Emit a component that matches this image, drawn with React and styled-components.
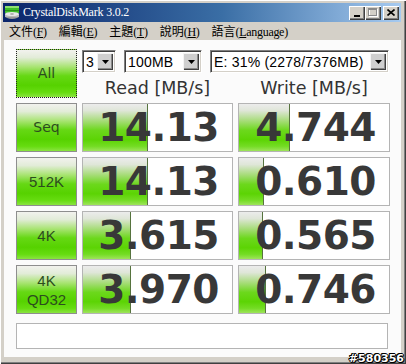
import React from "react";
import styled, { createGlobalStyle } from "styled-components";

const GlobalStyle = createGlobalStyle`
  html, body {
    margin: 0;
    padding: 0;
    background: #d4d0c8;
  }
`;

const Window = styled.div`
  position: relative;
  width: 406px;
  height: 364px;
  box-sizing: border-box;
  padding: 3px 5px 7px 3px;
  background: #d4d0c8;
  box-shadow: inset 1px 1px #ffffff, inset -1px -1px #404040, inset -2px -2px #808080;
  display: flex;
  flex-direction: column;
  overflow: hidden;
`;

const TitleBar = styled.div`
  height: 19px;
  display: flex;
  align-items: center;
  padding: 0 2px 0 1px;
  background: linear-gradient(to right, #0a246a 0%, #3a6ea5 55%, #a6caf0 100%);
`;

const TitleText = styled.span`
  flex: 1;
  margin-left: 3px;
  color: #ffffff;
  font-family: "Liberation Serif", "DejaVu Serif", serif;
  font-size: 12px;
  letter-spacing: -0.2px;
`;

const CaptionButton = styled.div`
  width: 16px;
  height: 14px;
  box-sizing: border-box;
  margin-left: ${(p) => (p.$gap ? "2px" : "0")};
  background: #d4d0c8;
  box-shadow: inset 1px 1px #ffffff, inset -1px -1px #404040, inset -2px -2px #808080;
  display: flex;
  align-items: center;
  justify-content: center;
`;

const MenuBar = styled.div`
  height: 18px;
  display: flex;
  align-items: center;
  font-family: "Noto Sans CJK TC", "Liberation Serif", serif;
  font-size: 12px;
  color: #000;
`;

const MenuItem = styled.span`
  padding: 0 5px 0 6px;
  margin-right: 1px;
  line-height: 16px;
  white-space: nowrap;
`;

const MenuKey = styled.span`
  font-family: "Liberation Serif", serif;
  font-size: 12px;
  letter-spacing: -0.3px;
  & u {
    text-underline-offset: 1px;
  }
`;

const Client = styled.div`
  flex: 1;
  margin: 0 0 0 1px;
  background: #fbfbfb;
  padding: 9px 0 0 12px;
  display: grid;
  grid-template-columns: 61px 151px 152px;
  grid-template-rows: 23px 21px repeat(4, 49px) 30px;
  column-gap: 5px;
  row-gap: 5px;
  align-content: start;
`;

const GreenButton = styled.div`
  box-sizing: border-box;
  grid-row: ${(p) => p.$row || "auto"};
  border: 1px ${(p) => (p.$focus ? "dotted #222" : "solid #8e8e8e")};
  background: linear-gradient(
    to bottom,
    #f2f2ee 0%,
    #e2ecd8 16%,
    #a8e472 36%,
    #66d814 55%,
    #56d200 75%,
    #66dc10 90%,
    #8ae440 100%
  );
  display: flex;
  flex-direction: column;
  align-items: center;
  justify-content: center;
`;

const ButtonLabel = styled.span`
  color: #2c4d1e;
  font-family: ${(p) => (p.$bold ? '"DejaVu Sans", sans-serif' : '"Liberation Sans", Arial, sans-serif')};
  font-size: ${(p) => (p.$bold ? "14px" : "15px")};
  line-height: 19px;
`;

const ComboRow = styled.div`
  grid-column: 2 / 4;
  display: flex;
  gap: 8px;
  margin-top: 1px;
`;

const Combo = styled.div`
  width: ${(p) => p.$w}px;
  height: 23px;
  box-sizing: border-box;
  background: #ffffff;
  border: 1px solid;
  border-color: #808080 #ffffff #ffffff #808080;
  box-shadow: inset 1px 1px #404040, inset -1px -1px #d4d0c8;
  display: flex;
  align-items: center;
  padding: 2px 2px 2px 3px;
  font-family: "Liberation Sans", Arial, sans-serif;
  font-size: 14px;
  letter-spacing: 0.2px;
  color: #000;
`;

const ComboText = styled.span`
  flex: 1;
  white-space: nowrap;
  overflow: hidden;
`;

const DropButton = styled.div`
  width: 16px;
  height: 17px;
  flex: none;
  box-sizing: border-box;
  background: #cfcfcf;
  box-shadow: inset 1px 1px #f4f4f4, inset -1px -1px #404040, inset -2px -2px #8a8a8a;
  display: flex;
  align-items: center;
  justify-content: center;
`;

const Header = styled.div`
  text-align: center;
  font-family: "DejaVu Sans", Verdana, sans-serif;
  font-size: 17.5px;
  line-height: 21px;
  color: #333;
  margin-top: 1px;
`;

const Cell = styled.div`
  position: relative;
  box-sizing: border-box;
  border: 1px solid #b4b4b4;
  background: #ffffff;
  overflow: hidden;
  display: flex;
  align-items: center;
  justify-content: flex-end;
  padding-right: 13px;
`;

const Bar = styled.div`
  position: absolute;
  left: 0;
  top: 0;
  bottom: 0;
  border-right: 1px solid #56733e;
  background: linear-gradient(
    to bottom,
    #ececec 0%,
    #dfe6d8 14%,
    #a6dc78 36%,
    #6cd81c 56%,
    #5cd404 76%,
    #74dc24 90%,
    #9ee45a 100%
  );
`;

const Value = styled.span`
  position: relative;
  font-family: "DejaVu Sans", Verdana, sans-serif;
  font-weight: bold;
  font-size: 39px;
  letter-spacing: -0.5px;
  line-height: 1;
  color: #383838;
`;

const Comment = styled.div`
  grid-column: 1 / 4;
  width: 372px;
  margin-top: 4px;
  box-sizing: border-box;
  border: 1px solid #b4b4b4;
  background: #ffffff;
`;

const Watermark = styled.div`
  position: absolute;
  right: 2px;
  bottom: -1px;
  font-family: "DejaVu Sans", sans-serif;
  font-weight: bold;
  font-size: 11px;
  color: #ffffff;
  text-shadow: 1px 0 #000, -1px 0 #000, 0 1px #000, 0 -1px #000, 1px 1px #000, -1px -1px #000;
`;

const AppIcon = () => (
  <svg width="16" height="16" viewBox="0 0 16 16">
    <rect x="1" y="1" width="14" height="7" fill="#3fbf2a" />
    <rect x="1" y="1" width="14" height="2" fill="#8fe070" />
    <rect x="1" y="5" width="14" height="1" fill="#2a8f1a" />
    <ellipse cx="8" cy="11" rx="7" ry="3" fill="#9a9a9a" />
    <rect x="1" y="9" width="14" height="3" fill="#b8b8b8" />
    <ellipse cx="8" cy="9" rx="7" ry="2" fill="#e8e8e8" />
    <ellipse cx="8" cy="9" rx="2" ry="0.8" fill="#9a9a9a" />
  </svg>
);

const Arrow = () => (
  <svg width="7" height="4" viewBox="0 0 7 4">
    <path d="M0 0h7L3.5 4z" fill="#000" />
  </svg>
);

const rows = [
  { label: "Seq", read: "14.13", readBar: 64, write: "4.744", writeBar: 50 },
  { label: "512K", read: "14.13", readBar: 64, write: "0.610", writeBar: 24 },
  { label: "4K", read: "3.615", readBar: 47, write: "0.565", writeBar: 23 },
  { label: ["4K", "QD32"], read: "3.970", readBar: 47, write: "0.746", writeBar: 26 },
];

const menus = [
  ["文件", "F"],
  ["編輯", "E"],
  ["主題", "T"],
  ["說明", "H"],
  ["語言", "Language"],
];

const App = () => {
  return (
    <Window>
      <GlobalStyle />
      <TitleBar>
        <AppIcon />
        <TitleText>CrystalDiskMark 3.0.2</TitleText>
        <CaptionButton>
          <svg width="8" height="8" viewBox="0 0 8 8">
            <rect x="1" y="6" width="6" height="2" fill="#000" />
          </svg>
        </CaptionButton>
        <CaptionButton>
          <svg width="10" height="9" viewBox="0 0 10 9">
            <rect x="1.5" y="1.5" width="8" height="7" fill="none" stroke="#fff" />
            <rect x="0.5" y="0.5" width="8" height="7" fill="none" stroke="#8a8a8a" />
            <rect x="0.5" y="1" width="8" height="1" fill="#8a8a8a" />
          </svg>
        </CaptionButton>
        <CaptionButton $gap>
          <svg width="8" height="7" viewBox="0 0 8 7">
            <path d="M0.5 0.5L7.5 6.5M7.5 0.5L0.5 6.5" stroke="#000" strokeWidth="1.6" />
          </svg>
        </CaptionButton>
      </TitleBar>
      <MenuBar>
        {menus.map(([name, key]) => (
          <MenuItem key={key}>
            {name}
            <MenuKey>
              (<u>{key[0]}</u>
              {key.slice(1)})
            </MenuKey>
          </MenuItem>
        ))}
      </MenuBar>
      <Client>
        <GreenButton $row="1 / 3" $focus>
          <ButtonLabel $bold>All</ButtonLabel>
        </GreenButton>
        <ComboRow>
          <Combo $w={34}>
            <ComboText>3</ComboText>
            <DropButton>
              <Arrow />
            </DropButton>
          </Combo>
          <Combo $w={78}>
            <ComboText>100MB</ComboText>
            <DropButton>
              <Arrow />
            </DropButton>
          </Combo>
          <Combo $w={179}>
            <ComboText>E: 31% (2278/7376MB)</ComboText>
            <DropButton>
              <Arrow />
            </DropButton>
          </Combo>
        </ComboRow>
        <Header>Read [MB/s]</Header>
        <Header>Write [MB/s]</Header>
        {rows.map((r) => (
          <React.Fragment key={r.read + r.write}>
            <GreenButton>
              {(Array.isArray(r.label) ? r.label : [r.label]).map((l) => (
                <ButtonLabel key={l} $bold={l === "Seq"}>
                  {l}
                </ButtonLabel>
              ))}
            </GreenButton>
            <Cell>
              <Bar style={{ width: r.readBar }} />
              <Value>{r.read}</Value>
            </Cell>
            <Cell>
              <Bar style={{ width: r.writeBar }} />
              <Value>{r.write}</Value>
            </Cell>
          </React.Fragment>
        ))}
        <Comment />
      </Client>
      <Watermark>#580356</Watermark>
    </Window>
  );
};

export default App;
